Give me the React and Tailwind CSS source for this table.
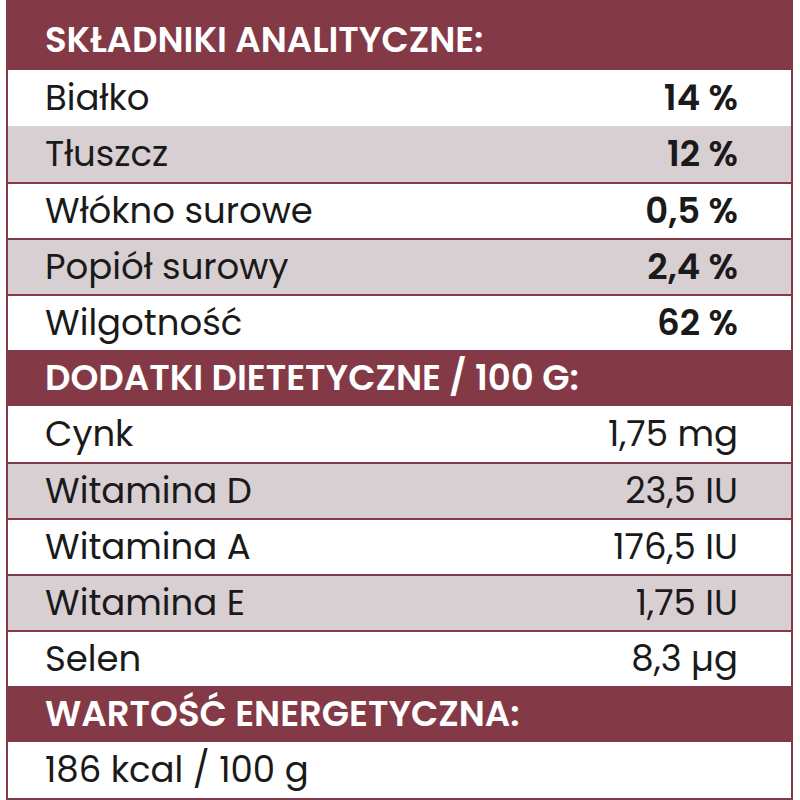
import React from "react";

const maroon = "border-[#843a46]";

const sections = [
  {
    title: "SKŁADNIKI ANALITYCZNE:",
    first: true,
    bold: true,
    rows: [
      ["Białko", "14 %"],
      ["Tłuszcz", "12 %", true],
      ["Włókno surowe", "0,5 %"],
      ["Popiół surowy", "2,4 %"],
      ["Wilgotność", "62 %"],
    ],
  },
  {
    title: "DODATKI DIETETYCZNE / 100 G:",
    rows: [
      ["Cynk", "1,75 mg"],
      ["Witamina D", "23,5 IU"],
      ["Witamina A", "176,5 IU"],
      ["Witamina E", "1,75 IU"],
      ["Selen", "8,3 µg"],
    ],
  },
  {
    title: "WARTOŚĆ ENERGETYCZNA:",
    rows: [["186 kcal / 100 g", ""]],
  },
];

export default function App() {
  return (
    <div
      className="w-[800px] h-[800px] bg-white text-[#1a1a1a]"
      style={{ fontFamily: '"Poppins", "DejaVu Sans", sans-serif' }}
    >
      <div className={`ml-[6px] w-[787px] border-x-2 border-b-2 ${maroon} flex flex-col`}>
        {sections.map((s) => (
          <React.Fragment key={s.title}>
            <div
              className={`bg-[#843a46] text-white font-semibold text-[35.5px] leading-none pl-[37px] flex items-center ${
                s.first ? "h-[70px] pt-[10px]" : "h-[56px]"
              }`}
            >
              {s.title}
            </div>
            {s.rows.map(([label, value, noLine], i) => (
              <div
                key={label}
                className={`h-[56px] flex items-center justify-between pl-[37px] pr-[53px] text-[35.5px] leading-none ${
                  i % 2 === 1 ? "bg-[#d8cfd2]" : "bg-white"
                } ${i > 0 && !noLine ? `border-t-2 ${maroon}` : ""}`}
              >
                <span>{label}</span>
                <span className={s.bold ? "font-semibold" : ""}>{value}</span>
              </div>
            ))}
          </React.Fragment>
        ))}
      </div>
    </div>
  );
}
